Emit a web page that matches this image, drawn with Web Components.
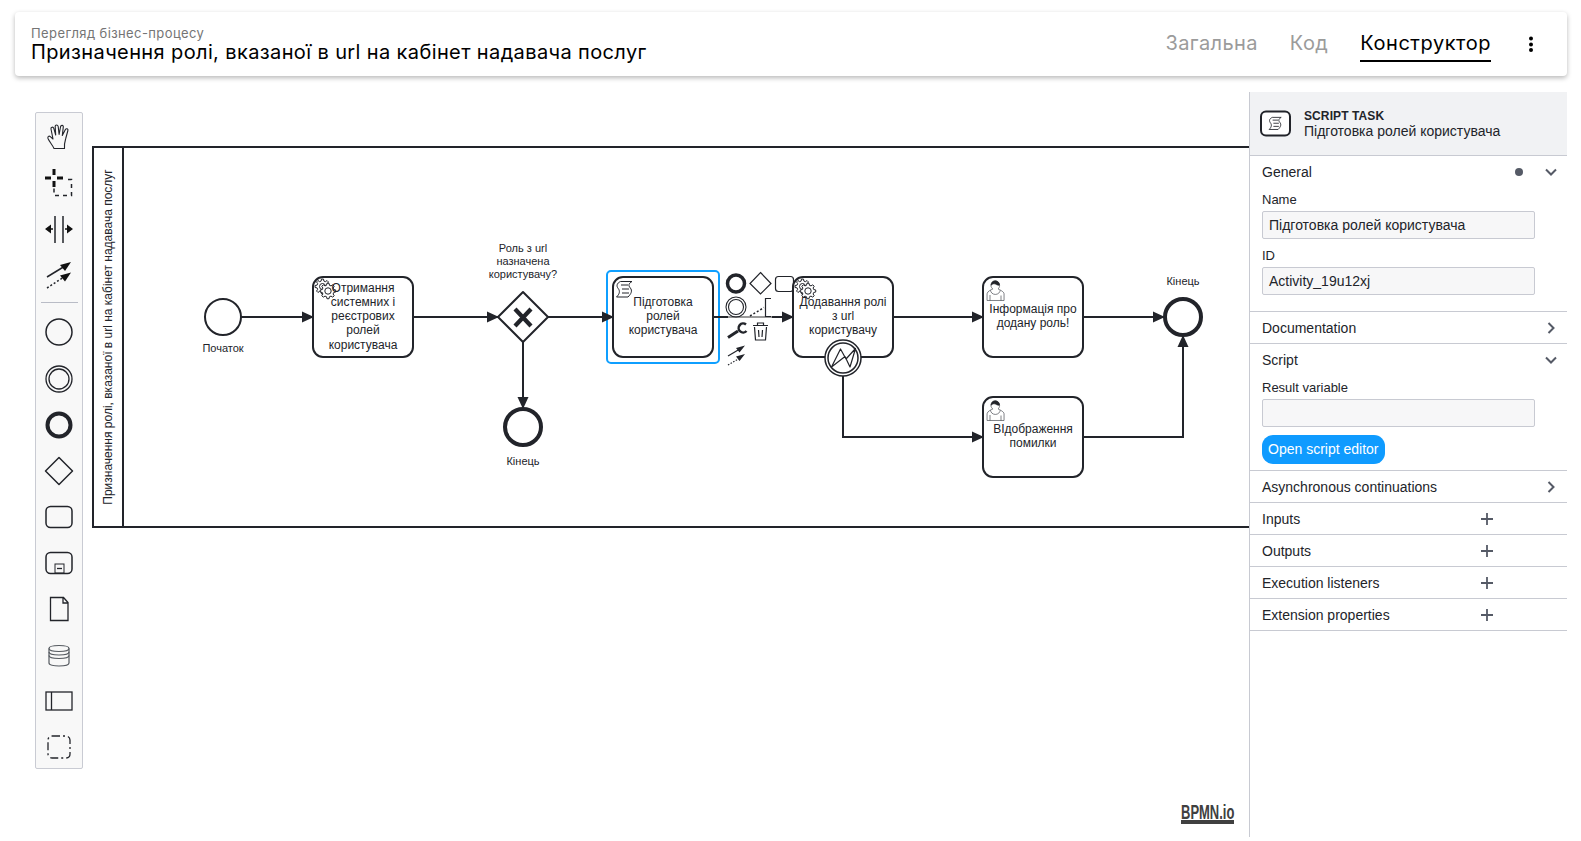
<!DOCTYPE html>
<html lang="uk">
<head>
<meta charset="utf-8">
<title>Перегляд бізнес-процесу</title>
<style>
html,body{margin:0;height:100%;background:#fff;overflow:hidden}
</style>
</head>
<body>
<bp-app>
  <app-header slot="header" overline="Перегляд бізнес-процесу" heading="Призначення ролі, вказаної в url на кабінет надавача послуг">
    <nav-tab>Загальна</nav-tab>
    <nav-tab>Код</nav-tab>
    <nav-tab active>Конструктор</nav-tab>
  </app-header>
  <bpmn-canvas slot="canvas">
    <bpmn-palette>
      <palette-tool icon="hand"></palette-tool>
      <palette-tool icon="lasso"></palette-tool>
      <palette-tool icon="space"></palette-tool>
      <palette-tool icon="connect"></palette-tool>
      <palette-sep></palette-sep>
      <palette-tool icon="start" style="margin-bottom:.5px"></palette-tool>
      <palette-tool icon="inter"></palette-tool>
      <palette-tool icon="end"></palette-tool>
      <palette-tool icon="gateway"></palette-tool>
      <palette-tool icon="task"></palette-tool>
      <palette-tool icon="sub"></palette-tool>
      <palette-tool icon="data"></palette-tool>
      <palette-tool icon="store"></palette-tool>
      <palette-tool icon="pool"></palette-tool>
      <palette-tool icon="group"></palette-tool>
    </bpmn-palette>
  </bpmn-canvas>
  <props-panel slot="panel" kind="SCRIPT TASK" name="Підготовка ролей користувача">
    <props-group heading="General" mode="open" dot>
      <props-field label="Name" value="Підготовка ролей користувача"></props-field>
      <props-field label="ID" value="Activity_19u12xj"></props-field>
      <props-spacer h="11"></props-spacer>
    </props-group>
    <props-group heading="Documentation" mode="closed"></props-group>
    <props-group heading="Script" mode="open">
      <props-field label="Result variable" value=""></props-field>
      <props-button>Open script editor</props-button>
      <props-spacer h="6"></props-spacer>
    </props-group>
    <props-group heading="Asynchronous continuations" mode="closed"></props-group>
    <props-group heading="Inputs" mode="add"></props-group>
    <props-group heading="Outputs" mode="add"></props-group>
    <props-group heading="Execution listeners" mode="add"></props-group>
    <props-group heading="Extension properties" mode="add"></props-group>
  </props-panel>
</bp-app>
<script>
const INK='#22242a';
const def=(name,html,init)=>customElements.define(name,class extends HTMLElement{
  constructor(){super();this.attachShadow({mode:'open'}).innerHTML=typeof html==='function'?html(this):html}
  connectedCallback(){
    if(typeof html==='function')this.shadowRoot.innerHTML=html(this);
    if(init)init(this);
  }
});

def('bp-app',`<style>
:host{display:grid;grid-template-rows:64px 745px;grid-template-columns:1fr;row-gap:16px;
  margin:12px 14px 0 15px;height:825px;font-family:"Liberation Sans",Arial,sans-serif}
.main{display:flex;min-width:0;min-height:0}
</style>
<slot name="header"></slot>
<div class="main"><slot name="canvas"></slot><slot name="panel"></slot></div>`);

def('app-header',h=>`<style>
:host{display:flex;align-items:center;justify-content:space-between;background:#fff;border-radius:4px;
  box-shadow:0 2px 5px rgba(0,0,0,.28);padding:0 29px 0 16px;font-family:Inter,Roboto,sans-serif}
.over{font-size:13px;line-height:16px;color:#757575;margin:1px 0 -1px;letter-spacing:.4px}
h1{margin:0;font-size:20px;line-height:24px;font-weight:400;color:#000;letter-spacing:.38px}
.right{display:flex;align-items:center;height:100%}
.tabs{display:flex;gap:32px;height:100%}
.kebab{margin-left:33px;width:14px;height:16px;display:block}
</style>
<div><div class="over">${h.getAttribute('overline')}</div><h1>${h.getAttribute('heading')}</h1></div>
<div class="right"><div class="tabs"><slot></slot></div>
<svg class="kebab" viewBox="0 0 14 16"><circle cx="7" cy="2.5" r="2"/><circle cx="7" cy="8.5" r="2"/><circle cx="7" cy="14" r="2"/></svg></div>`);

def('nav-tab',h=>`<style>
:host{display:flex;align-items:center;height:48px;box-sizing:border-box;font-size:20px;margin-top:2px;padding-top:12px;letter-spacing:${h.hasAttribute('active')?'.55px':'.4px'};
  color:${h.hasAttribute('active')?'#000':'#9b9b9b'};border-bottom:2px solid ${h.hasAttribute('active')?'#000':'transparent'}}
</style><slot></slot>`);

/* ---- palette ---- */
const ICONS={
hand:`<path transform="translate(1 0)" d="M17 34.5C15.5 31 12.5 28 11 24.5c-.6-2 1-3 2.300-1.900L16 25 14 15c-.4-2 2.200-2.600 2.800-.6l1.900 6.600-.5-8.500c-.1-2 2.600-2 3 0l.9 8 1.500-8c.4-1.700 3-1.500 2.700.4l-1 8.600 3.100-6c.9-1.500 3-.6 2.500 1L28.600 25c-.9 3-1.500 6-1.100 9.500z" fill="none" stroke="${INK}" stroke-width="1.100" stroke-linejoin="round"/>`,
lasso:`<path d="M18 9v6M18 21v6M9 18h6M21 18h6" stroke="#111" stroke-width="3" fill="none"/><path d="M32 19.500h3.500V35.500H18V27" fill="none" stroke="${INK}" stroke-width="1.500" stroke-dasharray="4 4"/>`,
space:`<path d="M19 10v27M27 10v27" stroke="${INK}" stroke-width="1.500" fill="none"/><path d="M9 23l6-4.500v9zM37 23l-6-4.500v9z" fill="#111"/><path d="M14 23h3M29 23h3" stroke="#111" stroke-width="1.500"/>`,
connect:`<path d="M11 25L29 14" stroke="${INK}" stroke-width="1.500" fill="none"/><path d="M35 10l-11 3 5 6z" fill="#111"/><path d="M11 36L28 25" stroke="${INK}" stroke-width="1.500" stroke-dasharray="2 2" fill="none"/><path d="M35 20.500l-11 3 5 6z" fill="#111"/>`,
start:`<circle cx="23" cy="23" r="13" fill="none" stroke="${INK}" stroke-width="1.500"/>`,
inter:`<circle cx="23" cy="23" r="13" fill="none" stroke="${INK}" stroke-width="1.300"/><circle cx="23" cy="23" r="10" fill="none" stroke="${INK}" stroke-width="1.300"/>`,
end:`<circle cx="23" cy="23" r="11.500" fill="none" stroke="${INK}" stroke-width="4"/>`,
gateway:`<path d="M23 9.500L36.500 23 23 36.500 9.500 23z" fill="none" stroke="${INK}" stroke-width="1.500" stroke-linejoin="round"/>`,
task:`<rect x="10" y="12.500" width="26" height="21" rx="4.500" fill="none" stroke="${INK}" stroke-width="1.500"/>`,
sub:`<rect x="10" y="12.500" width="26" height="21" rx="4.500" fill="none" stroke="${INK}" stroke-width="1.500"/><rect x="19" y="24" width="9" height="9" fill="none" stroke="${INK}"/><path d="M21 28.500h5" stroke="${INK}" stroke-width="1.300"/>`,
data:`<path d="M14.500 11.500H27.500L32 16.500V34.500H14.500zM27 11.500v5.500h5" fill="none" stroke="${INK}" stroke-width="1.300"/>`,
store:`<path d="M13 16.500c0-4 20-4 20 0V31c0 4-20 4-20 0z" fill="none" stroke="#555a60" stroke-width="1.200"/><path d="M13 16.500c0 4 20 4 20 0M13 20c0 4 20 4 20 0M13 23.500c0 4 20 4 20 0" fill="none" stroke="#555a60" stroke-width="1.200"/>`,
pool:`<rect x="10" y="14" width="26" height="18" fill="none" stroke="${INK}" stroke-width="1.300"/><path d="M15.500 14v18" stroke="${INK}" stroke-width="1.300"/>`,
group:`<rect x="12" y="12" width="22" height="22" rx="4" fill="none" stroke="${INK}" stroke-width="1.300" stroke-dasharray="8 3 2 3"/>`
};
def('bpmn-palette',`<style>
:host{position:absolute;left:20px;top:20px;z-index:2;display:flex;flex-direction:column;box-sizing:border-box;
  width:48px;height:657px;padding-top:1px;background:#f8f8f8;border:1px solid #c9cbd3;border-radius:2px}
</style><slot></slot>`);
def('palette-tool',h=>`<style>
:host{display:block;width:46px;height:46px;flex:none}
svg{display:block;width:46px;height:46px;overflow:visible}
</style><svg viewBox="0 0 46 46">${ICONS[h.getAttribute('icon')]||''}</svg>`);
def('palette-sep',`<style>
:host{display:block;flex:none;height:1px;margin:4px 4px 6px 5px;background:#b9bcc6}
</style>`);

/* ---- diagram ---- */
function gear(cx,cy,R,r,n){
  let d='';const st=Math.PI*2/n;
  for(let i=0;i<n;i++){
    const a=i*st;
    const p=(rad,ang)=>(cx+rad*Math.cos(ang)).toFixed(2)+' '+(cy+rad*Math.sin(ang)).toFixed(2);
    d+=(i?'L':'M')+p(r,a-st*.32)+'L'+p(R,a-st*.17)+'L'+p(R,a+st*.17)+'L'+p(r,a+st*.32);
  }
  return d+'Z';
}
const gears=(x,y)=>`<g fill="#fff" stroke="${INK}" stroke-width="1">
<path d="${gear(x+6.500,y+7.500,7.500,5.600,8)}"/><circle cx="${x+6.500}" cy="${y+7.500}" r="3"/>
<path d="${gear(x+12,y+12,7.800,5.900,8)}"/><circle cx="${x+12}" cy="${y+12}" r="3.200"/></g>`;
const user=(mx,my)=>`<g transform="translate(${mx} ${my})" stroke="#4a4d55" stroke-width=".7">
<path fill="#fff" d="m0,0 c.909,-.845 1.594,-2.049 1.594,-3.385 0,-2.554 -1.805,-4.622 -4.357,-4.622 -2.552,0 -4.288,2.068 -4.288,4.622 0,1.348 .974,2.562 1.896,3.405 -.529,.187 -5.669,2.097 -5.794,4.756 v6.718 h17 v-6.718 c0,-2.298 -5.528,-4.595 -6.051,-4.776 z m-8,6 l0,5.500 m11,0 l0,-5"/>
<path fill="#fff" d="m2.162,1.009 c0,2.447 -2.158,4.431 -4.821,4.431 -2.665,0 -4.822,-1.981 -4.822,-4.431"/>
<path fill="${INK}" stroke="${INK}" d="m-6.900,-3.800 c0,0 2.251,-2.358 4.274,-1.177 2.024,1.181 4.221,1.537 4.124,.965 -.098,-.57 -.117,-3.791 -4.191,-4.136 -3.575,.001 -4.208,3.367 -4.207,4.348 z"/></g>`;
const script=(x,y,s=1,sw=1)=>`<g transform="translate(${x} ${y}) scale(${s})" fill="#fff" stroke="${INK}" stroke-width="${sw}" stroke-linejoin="round">
<path d="M3.500.5h11.500c-3.500 2-3.800 4-1.800 6.300 2.500 3 1 6-2.200 9.200H-.500c3.200-3 3.700-6 1.700-8.500C-.800 5 -.300 2.200 3.500.5z"/>
<path d="M4 4h7M5 8h7M5 12h7" fill="none"/></g>`;
const lines=(cx,ys,arr,size=12)=>arr.map((t,i)=>`<text x="${cx}" y="${ys+i*(size===12?14.300:13)}" font-size="${size}" text-anchor="middle">${t}</text>`).join('');
const task=(x,y,children)=>`<rect x="${x}" y="${y}" width="100" height="80" rx="10" fill="#fff" stroke="${INK}" stroke-width="2"/>${children}`;
const flow=d=>`<path d="${d}" fill="none" stroke="${INK}" stroke-width="2" marker-end="url(#arrow)"/>`;

def('bpmn-canvas',`<style>
:host{display:block;position:relative;flex:1;min-width:0;height:745px;overflow:hidden;background:#fff}
svg.d{position:absolute;left:0;top:0;display:block;font-family:"Liberation Sans",Arial,sans-serif;fill:${INK}}
.logo{position:absolute;right:6px;bottom:12px;display:block;overflow:visible}
</style>
<svg class="d" width="1234" height="745" viewBox="15 92 1234 745">
<defs><marker id="arrow" viewBox="0 0 12 12" refX="11" refY="6" markerWidth="12" markerHeight="12" markerUnits="userSpaceOnUse" orient="auto">
<path d="M0 .5L12 6 0 11.500z" fill="${INK}"/></marker></defs>
<rect x="93" y="147" width="1300" height="380" fill="#fff" stroke="${INK}" stroke-width="2"/>
<path d="M123 147V527" stroke="${INK}" stroke-width="2"/>
<text transform="translate(112 337) rotate(-90)" font-size="12" text-anchor="middle">Призначення ролі, вказаної в url на кабінет надавача послуг</text>

<rect x="607" y="271" width="112" height="92" rx="4" fill="none" stroke="#0f9fff" stroke-width="2"/>
${flow('M241 317H313')}
${flow('M413 317H498')}
${flow('M548 317H613')}
${flow('M523 342V408')}
<path d="M714 317H728" stroke="${INK}" stroke-width="2"/>
<path d="M728 317H772" stroke="#777" stroke-width="1.500"/>
${flow('M772 317H793')}
${flow('M893 317H983')}
${flow('M1083 317H1164')}
${flow('M843 376V437H983')}
${flow('M1083 437H1183V336')}

<circle cx="223" cy="317" r="18" fill="#fff" stroke="${INK}" stroke-width="2"/>
<text x="223" y="352" font-size="11" text-anchor="middle">Початок</text>

${task(313,277,gears(316,279)+lines(363,291.500,['Отримання','системних і','реєстрових','ролей','користувача']))}

<path d="M523 292L548 317 523 342 498 317z" fill="#fff" stroke="${INK}" stroke-width="2" stroke-linejoin="round"/>
<path d="M515 309L531 326M531 309L515 326" stroke="${INK}" stroke-width="4.200" fill="none"/>
${lines(523,252,['Роль з url','назначена','користувачу?'],11)}

<circle cx="523" cy="427" r="18" fill="#fff" stroke="${INK}" stroke-width="4"/>
<text x="523" y="465" font-size="11" text-anchor="middle">Кінець</text>

${task(613,277,script(617,281)+lines(663,305.500,['Підготовка','ролей','користувача']))}

${task(793,277,gears(796,279)+lines(843,305.500,['Додавання ролі','з url','користувачу']))}
<circle cx="843" cy="358" r="18" fill="#fff" stroke="${INK}" stroke-width="1.500"/>
<circle cx="843" cy="358" r="15" fill="#fff" stroke="${INK}" stroke-width="1.500"/>
<path d="M831.500 367L840.500 349 846 359 855.500 348.500 850 367 845 356.500z" fill="#fff" stroke="${INK}" stroke-width="1.200" stroke-linejoin="round"/>

${task(983,277,user(998,289)+lines(1033,313,['Інформація про','додану роль!']))}
${task(983,397,user(998,409)+lines(1033,433,['ВІдображення','помилки']))}

<circle cx="1183" cy="317" r="18" fill="#fff" stroke="${INK}" stroke-width="4"/>
<text x="1183" y="285" font-size="11" text-anchor="middle">Кінець</text>

<g fill="none" stroke="${INK}">
  <circle cx="736" cy="283.500" r="8.500" stroke-width="3.500"/>
  <path d="M760.500 272.500L771 283.500 760.500 294 750 283.500z" stroke-width="1.200"/>
  <rect x="775.500" y="276.500" width="18" height="15" rx="3" stroke-width="1.200"/>
  <circle cx="736" cy="307" r="10" stroke-width="1.100"/><circle cx="736" cy="307" r="7.500" stroke-width="1.100"/>
  <path d="M750 316L764 307.500" stroke-width="1.500" stroke-dasharray="2 2"/>
  <path d="M771 298.500H765.500V316.500H771" stroke-width="1.200"/>
  <path d="M728 337.500L738 331" stroke-width="3"/>
  <path d="M746 324.500a4.500 4.500 0 1 0 .5 6.500" stroke-width="2.500"/>
  <path d="M753 325.500H768M757.500 325v-2h6v2M754.500 327L755.500 340H765.500L766.500 327M758.500 330l.5 7M762.500 330l-.5 7" stroke-width="1.200"/>
  <path d="M728 356L739 349.500" stroke-width="1.200"/><path d="M728 365L739 358.500" stroke-width="1.200" stroke-dasharray="1.500 1.500"/>
</g>
<path d="M745 345.500l-9 2.500 3.500 4.500zM745 354l-9 2.500 3.500 4.500z" fill="${INK}"/>
</svg>
<svg class="logo" width="62" height="26" viewBox="0 0 62 26">
<text transform="translate(0 20) scale(1 1.550)" font-family="Liberation Sans,Arial,sans-serif" font-weight="700" font-size="13" fill="#404040">BPMN.io</text>
<rect x="0" y="21" width="53" height="4" fill="#404040"/></svg>
<slot></slot>`);

/* ---- properties panel ---- */
def('props-panel',h=>`<style>
:host{display:block;flex:none;width:318px;height:745px;box-sizing:border-box;border-left:1px solid #c8cad2;background:#fff;
  font:14px "Liberation Sans",Arial,sans-serif;color:${INK};position:relative;z-index:1}
header{display:flex;align-items:center;box-sizing:border-box;height:64px;padding:0 0 0 10px;background:#f1f2f4;border-bottom:1px solid #c8cad2}
svg{flex:none;display:block;margin-right:12px}
.k{font-size:12px;font-weight:700;line-height:15px;letter-spacing:.1px;margin:1px 0 -1px}
.n{font-size:14px;line-height:16px}
</style>
<header><svg width="32" height="27" viewBox="0 0 32 27"><rect x="1" y="1.500" width="29" height="24" rx="5" fill="#fff" stroke="${INK}" stroke-width="2"/>
<g transform="translate(9.500 7) scale(.78)" fill="none" stroke="${INK}" stroke-width="1.100"><path d="M3.500.5h11.500c-3.500 2-3.800 4-1.800 6.300 2.500 3 1 6-2.200 9.200H-.500c3.200-3 3.700-6 1.700-8.500C-.800 5 -.300 2.200 3.500.5z"/><path d="M4 4h7M5 8h7M5 12h7"/></g></svg>
<div><div class="k">${h.getAttribute('kind')}</div><div class="n">${h.getAttribute('name')}</div></div></header>
<slot></slot>`);

def('props-group',h=>{
  const m=h.getAttribute('mode');
  const stroke='#555a66';
  const chev=m==='open'?`<path d="M3 5.500l5 5 5-5"/>`:`<path d="M5.500 3l5 5-5 5"/>`;
  const act=m==='add'
   ?`<svg class="plus" width="16" height="16" viewBox="0 0 16 16"><path d="M8 2v12M2 8h12" fill="none" stroke="${stroke}" stroke-width="1.800"/></svg>`
   :`<svg class="chev" width="16" height="16" viewBox="0 0 16 16"><g fill="none" stroke="${stroke}" stroke-width="2">${chev}</g></svg>`;
  return `<style>
:host{display:block;border-bottom:1px solid #c8cad2}
.row{display:flex;align-items:center;height:31px;padding-left:12px;margin-bottom:${m==='open'?'1px':'0'}}
.t{flex:1;font-size:14px}
.dot{width:8px;height:8px;border-radius:50%;background:#555a66;margin-right:20px}
svg{flex:none;display:block}
.chev{margin-right:8px}
.plus{margin-right:72px}
</style><div class="row"><span class="t">${h.getAttribute('heading')}</span>${h.hasAttribute('dot')?'<i class="dot"></i>':''}${act}</div><slot></slot>`;
});

def('props-field',h=>`<style>
:host{display:block;padding:4px 32px 0 12px;margin-bottom:5px}
label{display:block;font-size:13px;line-height:16px;margin-bottom:3px}
.v{box-sizing:border-box;height:28px;border:1px solid #c8cad2;border-radius:2px;background:#f7f7f8;padding:0 6px;line-height:26px;font-size:14px;white-space:nowrap;overflow:hidden}
</style><label>${h.getAttribute('label')}</label><div class="v">${h.getAttribute('value')}</div>`);

def('props-button',`<style>
:host{display:block;padding:3px 0 0 12px}
div{display:inline-block;height:29px;line-height:29px;padding:0 6px;border-radius:11px;background:#0f9bff;color:#fff;font-size:14px;vertical-align:top}
</style><div><slot></slot></div>`);

def('props-spacer',h=>`<style>:host{display:block;height:${+h.getAttribute('h')}px}</style>`);
</script>
</body>
</html>
